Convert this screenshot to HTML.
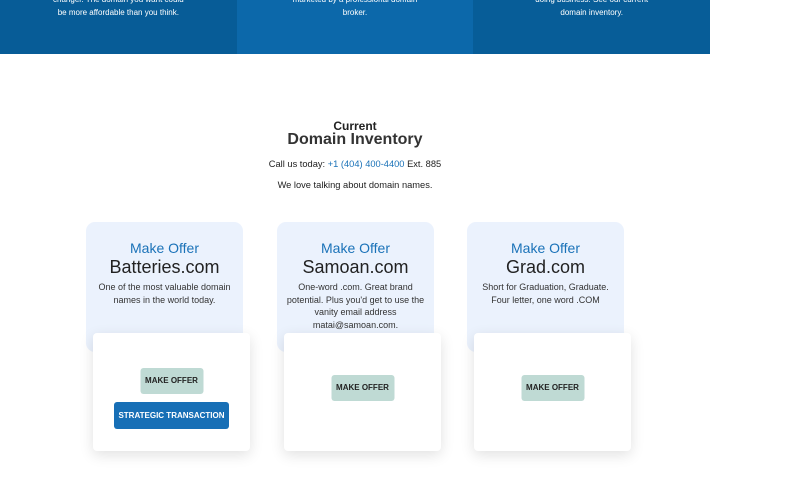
<!DOCTYPE html>
<html><head><meta charset="utf-8"><style>
*{margin:0;padding:0;box-sizing:border-box}
body{width:800px;height:480px;overflow:hidden;background:#fff;font-family:"Liberation Sans",sans-serif;position:relative;color:#333}
.band{position:absolute;left:0;top:0;width:710px;height:54px;display:flex}
.band div{flex:1;color:#fff;font-size:8px;line-height:12.5px;text-align:center}
.band div p{margin-top:-6px}
.c1{background:#075c97}.c2{background:#0c68aa}.c3{background:#075d98}
.h{position:absolute;left:0;width:710px;text-align:center}
.card{position:absolute;top:222px;width:157px;height:130px;background:#ebf2fd;border-radius:9px;text-align:center}
.card .mo{color:#1a72b8;font-size:14px;margin-top:18px;line-height:16px}
.card .dn{color:#222;font-size:18px;line-height:22px;margin-top:0}
.card .ds{font-size:9px;line-height:12.5px;margin:3px 10px 0;color:#333}
.wb{position:absolute;top:333px;width:157px;height:118px;background:#fff;border-radius:4px;box-shadow:0 4px 14px rgba(0,0,0,.12);text-align:center}
.b1{position:absolute;left:50%;transform:translateX(-50%);width:63px;height:26px;background:#bfdad4;border-radius:3px;font-size:8px;font-weight:bold;line-height:26px;color:#222}
.b2{position:absolute;left:21px;top:69px;width:115px;height:27px;background:#176fb6;border-radius:3px;font-size:8px;font-weight:bold;line-height:27px;color:#fff}
</style></head><body>
<div class="band">
<div class="c1"><p>changer. The domain you want could<br>be more affordable than you think.</p></div>
<div class="c2"><p>marketed by a professional domain<br>broker.</p></div>
<div class="c3"><p>doing business. See our current<br>domain inventory.</p></div>
</div>
<div class="h" style="top:119px;font-size:12px;font-weight:bold;color:#222">Current</div>
<div class="h" style="top:131px;font-size:16px;font-weight:bold;color:#333">Domain Inventory</div>
<div class="h" style="top:159px;font-size:9.3px;color:#222">Call us today: <span style="color:#1a72b8">+1 (404) 400-4400</span> Ext. 885</div>
<div class="h" style="top:180px;font-size:9.3px;color:#222">We love talking about domain names.</div>

<div class="card" style="left:86px"><div class="mo">Make Offer</div><div class="dn">Batteries.com</div><div class="ds">One of the most valuable domain names in the world today.</div></div>
<div class="card" style="left:277px"><div class="mo">Make Offer</div><div class="dn">Samoan.com</div><div class="ds" style="margin:3px 6px 0">One-word .com. Great brand potential. Plus you'd get to use the vanity email address matai@samoan.com.</div></div>
<div class="card" style="left:467px"><div class="mo">Make Offer</div><div class="dn">Grad.com</div><div class="ds">Short for Graduation, Graduate. Four letter, one word .COM</div></div>

<div class="wb" style="left:93px"><div class="b1" style="top:35px">MAKE OFFER</div><div class="b2">STRATEGIC TRANSACTION</div></div>
<div class="wb" style="left:284px"><div class="b1" style="top:42px">MAKE OFFER</div></div>
<div class="wb" style="left:474px"><div class="b1" style="top:42px">MAKE OFFER</div></div>
</body></html>
